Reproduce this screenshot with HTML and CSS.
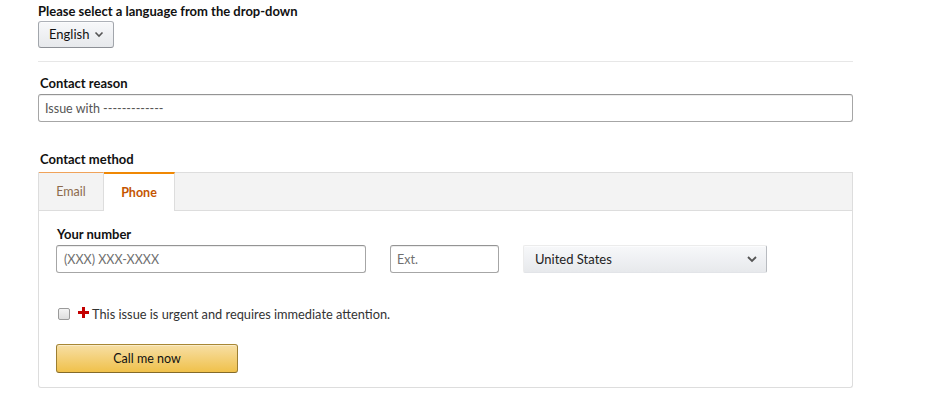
FILE: index.html
```html
<!DOCTYPE html>
<html>
<head>
<meta charset="utf-8">
<link rel="stylesheet" href="styles.css">
</head>
<body>
<div class="page">
  <div class="lang">
    <div class="label">Please select a language from the drop-down</div>
    <div class="select lang-select"><span>English</span><svg class="chev" width="10" height="7" viewBox="0 0 10 7"><path d="M1.5 1.5 L5 5 L8.5 1.5" fill="none" stroke="#555" stroke-width="1.6"/></svg></div>
  </div>
  <div class="divider"></div>
  <div class="field reason">
    <div class="label">Contact reason</div>
    <div class="input wide"><span class="value">Issue with -------------</span></div>
  </div>
  <div class="field method">
    <div class="label">Contact method</div>
    <div class="tabs">
      <div class="tab-head">
        <div class="tab">Email</div>
        <div class="tab active">Phone</div>
        <div class="tab-fill"></div>
      </div>
      <div class="tab-body">
        <div class="label">Your number</div>
        <div class="phone-row">
          <div class="input phone"><span class="ph">(XXX) XXX-XXXX</span></div>
          <div class="input ext"><span class="ph">Ext.</span></div>
          <div class="select country"><span>United States</span><svg class="chev" width="12" height="8" viewBox="0 0 12 8"><path d="M2 2 L6 6 L10 2" fill="none" stroke="#555" stroke-width="1.8"/></svg></div>
        </div>
        <div class="urgent">
          <span class="check"></span>
          <svg class="cross" width="11" height="11" viewBox="0 0 11 11"><path d="M4 0 H7 V4 H11 V7 H7 V11 H4 V7 H0 V4 H4 Z" fill="#c40000"/></svg>
          <span class="urgent-text">This issue is urgent and requires immediate attention.</span>
        </div>
        <div class="button">Call me now</div>
      </div>
    </div>
  </div>
</div>
</body>
</html>
```
FILE: styles.css
```css
html, body {
  margin: 0;
  padding: 0;
  background: #fff;
}
body {
  font-family: "Lato", "Open Sans", sans-serif;
  font-size: 13px;
  line-height: 15px;
  color: #111;
}
.page {
  width: 815px;
  padding: 4px 0 0 38px;
}
.label {
  font-weight: bold;
  font-size: 13px;
  line-height: 14px;
  color: #111;
}
.lang .label {
  margin-bottom: 3px;
}
.field > .label {
  padding-left: 2px;
}
.select {
  box-sizing: border-box;
  display: flex;
  align-items: center;
  justify-content: space-between;
  background: linear-gradient(to bottom, #f7f8fa, #e7e9ec);
  border: 1px solid #adb1b8;
  border-color: #adb1b8 #a2a6ac #8d9096;
  border-radius: 3px;
  box-shadow: 0 1px 0 rgba(255,255,255,.6) inset;
  color: #111;
  font-size: 13px;
}
.lang-select {
  width: 76px;
  height: 27px;
  padding: 0 9px 0 10px;
}
.divider {
  margin-top: 13px;
  height: 1px;
  background: #e7e7e7;
}
.reason {
  margin-top: 14px;
}
.reason .label {
  margin-bottom: 4px;
}
.input {
  box-sizing: border-box;
  display: flex;
  align-items: center;
  border: 1px solid #a6a6a6;
  border-top-color: #949494;
  border-radius: 3px;
  box-shadow: 0 1px 0 rgba(255,255,255,.5), 0 1px 0 rgba(0,0,0,.07) inset;
  background: #fff;
  font-size: 12.5px;
}
.wide {
  height: 28px;
  padding-left: 6px;
}
.value {
  color: #555;
}
.ph {
  color: #6f6f6f;
}
.method {
  margin-top: 30px;
}
.method > .label {
  margin-bottom: 6px;
}
.tabs {
  box-sizing: border-box;
  height: 216px;
  border: 1px solid #ddd;
  border-top: none;
  border-radius: 0 0 3px 3px;
}
.tab-head {
  display: flex;
  height: 39px;
}
.tab {
  box-sizing: border-box;
  display: flex;
  align-items: center;
  justify-content: center;
  background: #f3f3f3;
  border-top: 1px solid #f0a35a;
  border-right: 1px solid #ddd;
  border-bottom: 1px solid #ddd;
  color: #8c6a4c;
  font-size: 12.5px;
  width: 65px;
}
.tab.active {
  width: 71px;
  background: #fff;
  border-top: 2px solid #f08804;
  border-bottom: none;
  color: #c45500;
  font-weight: bold;
  padding-bottom: 1px;
}
.tab-fill {
  flex: 1;
  background: #f3f3f3;
  border-top: 1px solid #ddd;
  border-bottom: 1px solid #ddd;
}
.tab-body {
  padding: 16px 0 0 18px;
}
.tab-body > .label {
  margin-bottom: 4px;
}
.phone-row {
  display: flex;
}
.phone {
  width: 310px;
  height: 28px;
  margin-left: -1px;
  padding-left: 7px;
}
.ext {
  width: 109px;
  height: 28px;
  margin-left: 24px;
  padding-left: 6px;
}
.country {
  width: 244px;
  height: 28px;
  margin-left: 24px;
  padding: 0 8px 0 11px;
  border-radius: 2px;
  border-color: #ececec #b8bbc0 #e2e4e8 #ececec;
  color: #222;
}
.urgent {
  display: flex;
  align-items: center;
  margin-top: 34px;
  height: 14px;
}
.check {
  box-sizing: border-box;
  width: 12px;
  height: 12px;
  border: 1px solid #9a9a9a;
  border-radius: 2px;
  background: linear-gradient(#f4f4f4, #dedede);
  margin-left: 1px;
}
.cross {
  margin-left: 8px;
  margin-top: -3px;
}
.urgent-text {
  margin-left: 3px;
  color: #333;
  font-size: 12.8px;
}
.button {
  box-sizing: border-box;
  margin-top: 23px;
  margin-left: -1px;
  width: 182px;
  height: 29px;
  display: flex;
  align-items: center;
  justify-content: center;
  background: linear-gradient(to bottom, #f7dfa5, #f0c14b);
  border: 1px solid;
  border-color: #a88734 #9c7e31 #846a29;
  border-radius: 3px;
  box-shadow: 0 1px 0 rgba(255,255,255,.4) inset;
  color: #111;
  font-size: 12.5px;
}
```
